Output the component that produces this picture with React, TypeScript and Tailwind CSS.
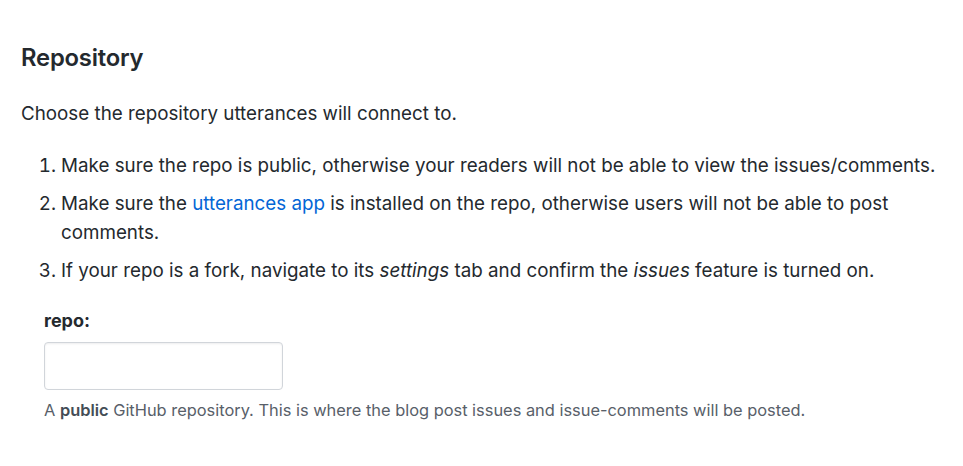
export default function App() {
  return (
    <div className="min-h-[466px] w-[963px] bg-white pl-[21px] pt-[42px] text-[#24292e] [font-family:Inter,'Noto_Sans',sans-serif]">
      <h2 className="text-[23.8px] font-semibold leading-[32px] tracking-[-0.2px]">Repository</h2>
      <p className="mt-[25px] text-[18.8px] leading-[30px]">Choose the repository utterances will connect to.</p>
      <ol className="mt-[22px] list-decimal pl-[40px] text-[18.8px] leading-[29px]">
        <li>
          Make sure the repo is public, otherwise your readers will not be able to view the issues/comments.
        </li>
        <li className="mt-[9px] w-[850px]">
          Make sure the <a className="text-[#0366d6]" href="#">utterances app</a> is installed on the repo, otherwise users will not be able to post comments.
        </li>
        <li className="mt-[9px]">
          If your repo is a fork, navigate to its <em>settings</em> tab and confirm the <em>issues</em> feature is turned on.
        </li>
      </ol>
      <div className="mt-[24px] pl-[23px]">
        <label className="block text-[18px] font-bold leading-[24px]">repo:</label>
        <input className="mt-[9px] block h-[48px] w-[239px] rounded-[4px] border border-[#d1d5da] px-2 shadow-[inset_0_1px_2px_rgba(27,31,35,0.075)] outline-none" />
        <p className="mt-[9px] text-[16.4px] leading-[22px] text-[#586069]">
          A <strong className="font-semibold text-[#444d56]">public</strong> GitHub repository. This is where the blog post issues and issue-comments will be posted.
        </p>
      </div>
    </div>
  );
}
